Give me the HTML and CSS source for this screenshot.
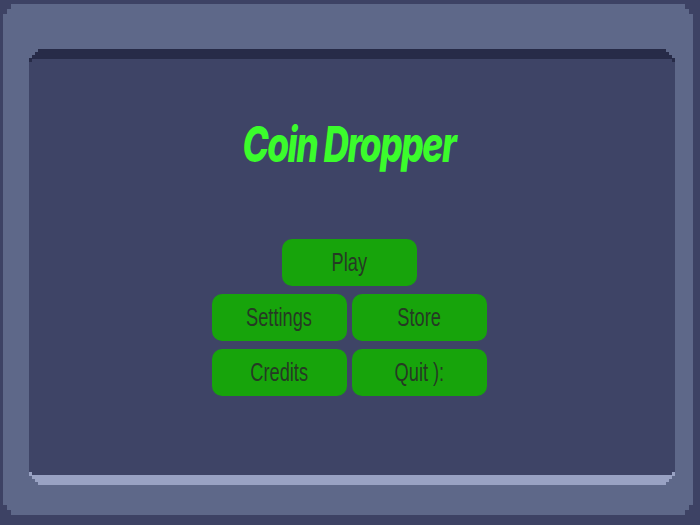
FILE: index.html
```html
<!DOCTYPE html>
<html lang="en">
  <head>
    <meta charset="UTF-8" />
    <meta name="viewport" content="width=device-width, initial-scale=1.0" />
    <title>Coin Dropper</title>
    <link rel="stylesheet" href="styles.css">
  </head>
  <body>
    <div class="frame">
      <div class="panel">
        <div class="panel-fill">
          <h1 class="title">Coin Dropper</h1>

          <div class="menu">
            <button class="menu-btn menu-btn-play"><span class="menu-label">Play</span></button>
            <button class="menu-btn"><span class="menu-label">Settings</span></button>
            <button class="menu-btn"><span class="menu-label">Store</span></button>
            <button class="menu-btn"><span class="menu-label">Credits</span></button>
            <button class="menu-btn"><span class="menu-label">Quit ):</span></button>
          </div>
        </div>
      </div>
    </div>
  </body>
</html>
```

FILE: styles.css
```css
body {
  margin: 0;
  padding: 4px 0 0 3px;
  height: 525px;
  box-sizing: border-box;
  overflow: hidden;
  background-color: #3d4264;
  font-family: 'Liberation Sans', Arial, sans-serif;
}

/* outer pixel-art frame, corners cut in two steps */
.frame {
  width: 690px;
  height: 511px;
  box-sizing: border-box;
  padding: 45px 0 0 26px;
  background-color: #5e6889;
  clip-path: polygon(
    8px 0, calc(100% - 8px) 0, calc(100% - 8px) 5px, calc(100% - 4px) 5px,
    calc(100% - 4px) 10px, 100% 10px, 100% calc(100% - 10px),
    calc(100% - 4px) calc(100% - 10px), calc(100% - 4px) calc(100% - 5px),
    calc(100% - 8px) calc(100% - 5px), calc(100% - 8px) 100%, 8px 100%,
    8px calc(100% - 5px), 4px calc(100% - 5px), 4px calc(100% - 10px),
    0 calc(100% - 10px), 0 10px, 4px 10px, 4px 5px, 8px 5px
  );
}

/* inner screen: dark lip on top, light lip below */
.panel {
  width: 646px;
  height: 436px;
  box-sizing: border-box;
  padding: 10px 0;
  background: linear-gradient(#272b48 50%, #99a2c3 50%);
  clip-path: polygon(
    9px 0, calc(100% - 9px) 0, calc(100% - 9px) 3px, calc(100% - 6px) 3px,
    calc(100% - 6px) 6px, calc(100% - 3px) 6px, calc(100% - 3px) 9px,
    100% 9px, 100% calc(100% - 9px), calc(100% - 3px) calc(100% - 9px),
    calc(100% - 3px) calc(100% - 6px), calc(100% - 6px) calc(100% - 6px),
    calc(100% - 6px) calc(100% - 3px), calc(100% - 9px) calc(100% - 3px),
    calc(100% - 9px) 100%, 9px 100%, 9px calc(100% - 3px), 6px calc(100% - 3px),
    6px calc(100% - 6px), 3px calc(100% - 6px), 3px calc(100% - 9px),
    0 calc(100% - 9px), 0 9px, 3px 9px, 3px 6px, 6px 6px, 6px 3px, 9px 3px
  );
}

.panel-fill {
  height: 100%;
  box-sizing: border-box;
  padding-right: 6px;
  display: flex;
  flex-direction: column;
  align-items: center;
  background-color: #3e4466;
  clip-path: polygon(
    3px 0, calc(100% - 3px) 0, calc(100% - 3px) 3px, 100% 3px,
    100% calc(100% - 3px), calc(100% - 3px) calc(100% - 3px),
    calc(100% - 3px) 100%, 3px 100%, 3px calc(100% - 3px), 0 calc(100% - 3px),
    0 3px, 3px 3px
  );
}

.title {
  margin: 58px 0 0;
  font-family: Inter, 'Noto Sans', sans-serif;
  font-size: 49px;
  font-weight: 800;
  font-style: italic;
  line-height: 56px;
  letter-spacing: -2px;
  color: #3bfc2c;
  transform: scaleX(0.72);
}

.menu {
  margin-top: 66px;
  display: grid;
  grid-template-columns: 135px 135px;
  column-gap: 5px;
  row-gap: 8px;
}

.menu-btn {
  height: 47px;
  padding: 0;
  border: none;
  border-radius: 10px;
  background-color: #17a40b;
  color: #253a24;
  font-family: 'Liberation Sans', Arial, sans-serif;
  font-size: 26px;
  cursor: pointer;
}

/* the game font is a tall narrow face */
.menu-label {
  display: inline-block;
  transform: scaleX(0.7);
}

.menu-btn-play {
  grid-column: 1 / span 2;
  justify-self: center;
  width: 135px;
}
```
